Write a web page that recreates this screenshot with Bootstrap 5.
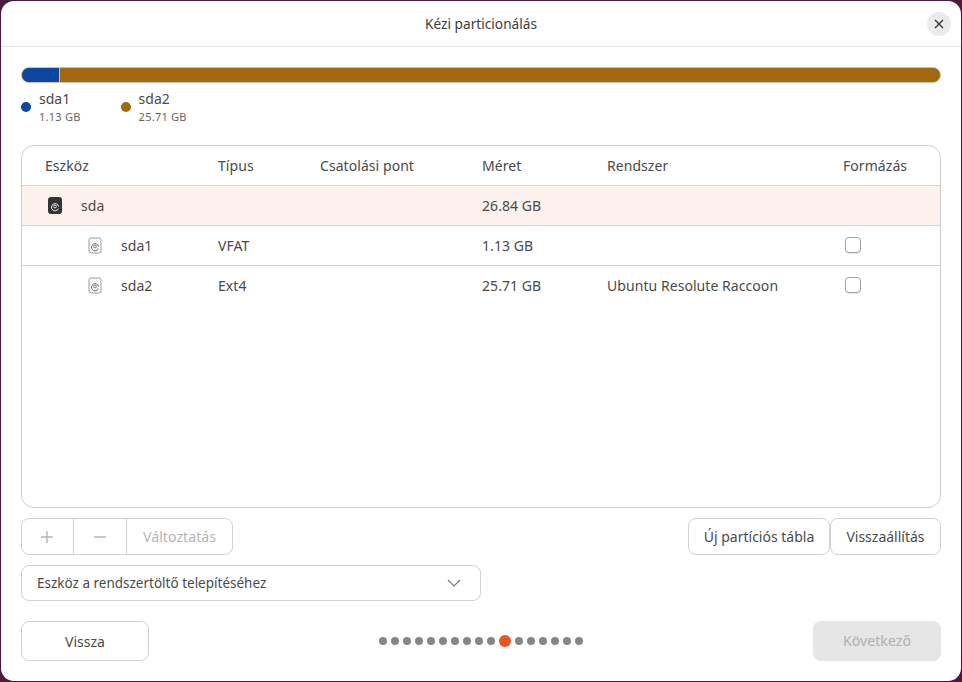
<!DOCTYPE html>
<html lang="hu">
<head>
    <meta charset="UTF-8">
    <meta name="viewport" content="width=device-width, initial-scale=1.0">
    <title>Kézi particionálás</title>
    <link rel="stylesheet" href="https://cdn.jsdelivr.net/npm/bootstrap@5.3.0/dist/css/bootstrap.min.css">
    <style>
        html, body { height: 100%; }
        body { background: #4b1b3f; font-family: "Noto Sans", "Open Sans", sans-serif; font-size: 14px; color: #4a4a4a; overflow: hidden; }
        .app-window { background: #fff; height: 680px; margin: 1px; border-radius: 13px; overflow: hidden; }
        .app-head { height: 46px; flex-shrink: 0; border-bottom: 1px solid #e3e3e3; }
        .app-title { font-size: 13.7px; color: #3d3d3d; padding-top: 1px; }
        .close-btn { right: 10px; top: 11px; width: 24px; height: 24px; background: #ebebeb; border: 0; border-radius: 50%; padding: 0; }
        .app-body { padding: 20px; }
        .usage-bar { height: 16px; flex-shrink: 0; border-radius: 8px; border: 1px solid #c9c4bb; background: #a1680d; overflow: hidden; }
        .usage-blue { background: #0c47a1; border-right: 1px solid #c9c4bb; }
        .legend-row { margin-top: 7px; height: 40px; gap: 40px; flex-shrink: 0; }
        .legend-dot { width: 10px; height: 10px; border-radius: 50%; margin-top: 12px; margin-right: 8px; }
        .legend-name { font-size: 14px; line-height: 18px; }
        .legend-size { font-size: 11px; letter-spacing: .25px; line-height: 16px; color: #666; margin-top: 1px; }
        .dot-blue { background: #0c47a1; }
        .dot-brown { background: #a1680d; }
        .parts-box { height: 363px; flex-shrink: 0; margin-top: 15px; border: 1px solid #cfcfcf; border-radius: 13px; overflow: hidden; }
        .parts-table { table-layout: fixed; width: 100%; margin: 0; border-collapse: separate; border-spacing: 0; font-size: 14px; letter-spacing: .06px; }
        .parts-table th, .parts-table td { height: 40px; padding: 0; font-weight: 400; vertical-align: middle; border-bottom: 1px solid #d4d4d4; background: transparent; box-shadow: none; color: #4a4a4a; }
        .parts-table tbody tr:last-child td { border-bottom: 0; padding-bottom: 1px; }
        .parts-table th:first-child { padding-left: 23px; }
        .parts-table .row-disk td { background: #fcf1ed; }
        .tree-icon { width: 14px; height: 17px; display: block; }
        .disk-cell { gap: 19px; padding-left: 26px; }
        .part-cell { gap: 19px; padding-left: 66px; }
        .fmt-check { width: 16px; height: 16px; margin: -1px 0 0 2px; display: block; border: 1px solid #a0a0a0; border-radius: 4px; background: #fff; box-shadow: 0 1px 1px rgba(0,0,0,.08); appearance: none; }
        .tool-row { margin-top: 10px; height: 37px; flex-shrink: 0; }
        .seg-group { border: 1px solid #d2d2d2; border-radius: 8px; height: 37px; color: #b5b5b5; font-size: 14.2px; }
        .seg-item { height: 100%; border-right: 1px solid #d2d2d2; }
        .seg-item:last-child { border-right: 0; }
        .seg-add { width: 52px; padding-right: 2px; }
        .seg-remove { width: 53px; }
        .seg-change { width: 105px; }
        .soft-btn { height: 37px; border: 1px solid #d2d2d2; border-radius: 8px; background: #fff; color: #4a4a4a; font-size: 14px; padding: 0; }
        .new-table-btn { width: 142px; }
        .reset-btn { width: 111px; }
        .boot-select { width: 460px; height: 36px; flex-shrink: 0; margin-top: 10px; border: 1px solid #d2d2d2; border-radius: 8px; padding: 0 19px 0 15px; font-size: 13.5px; }
        .foot-row { margin-top: 20px; height: 40px; flex-shrink: 0; }
        .back-btn { width: 128px; height: 40px; }
        .next-btn { width: 128px; height: 40px; background: #e6e6e6; border: 0; border-radius: 8px; color: #b0b0b0; font-size: 14.2px; padding: 0; }
        .step-dots { left: 358px; top: 16px; gap: 4px; }
        .step-dot { width: 8px; height: 8px; border-radius: 50%; background: #868686; }
        .step-now { width: 12px; height: 12px; background: #e95420; margin: -2px 0; }
    </style>
</head>
<body>
    <div class="app-window d-flex flex-column">
        <!-- Header -->
        <div class="app-head position-relative d-flex align-items-center justify-content-center">
            <span class="app-title">Kézi particionálás</span>
            <button class="close-btn position-absolute d-flex align-items-center justify-content-center" type="button" aria-label="Bezárás">
                <svg width="10" height="10" viewBox="0 0 10 10"><path d="M1 1l8 8M9 1l-8 8" stroke="#2e2e2e" stroke-width="1.2" fill="none"/></svg>
            </button>
        </div>

        <div class="app-body d-flex flex-column">
            <!-- Usage bar -->
            <div class="usage-bar d-flex">
                <div class="usage-blue" id="barBlue"></div>
            </div>
            <div class="legend-row d-flex">
                <div class="d-flex">
                    <span class="legend-dot dot-blue"></span>
                    <div><div class="legend-name">sda1</div><div class="legend-size">1.13 GB</div></div>
                </div>
                <div class="d-flex">
                    <span class="legend-dot dot-brown"></span>
                    <div><div class="legend-name">sda2</div><div class="legend-size">25.71 GB</div></div>
                </div>
            </div>

            <!-- Partition table -->
            <div class="parts-box">
                <table class="table parts-table">
                    <colgroup>
                        <col style="width:196px"><col style="width:102px"><col style="width:162px"><col style="width:125px"><col style="width:236px"><col>
                    </colgroup>
                    <thead>
                        <tr><th>Eszköz</th><th>Típus</th><th>Csatolási pont</th><th>Méret</th><th>Rendszer</th><th>Formázás</th></tr>
                    </thead>
                    <tbody id="partRows"></tbody>
                </table>
            </div>

            <!-- Tools -->
            <div class="tool-row d-flex justify-content-between">
                <div class="seg-group d-flex">
                    <div class="seg-item seg-add d-flex align-items-center justify-content-center">
                        <svg width="12" height="12" viewBox="0 0 12 12"><path d="M6 0v12M0 6h12" stroke="#b5b5b5" stroke-width="1.4" fill="none"/></svg>
                    </div>
                    <div class="seg-item seg-remove d-flex align-items-center justify-content-center">
                        <svg width="12" height="12" viewBox="0 0 12 12"><path d="M0 6h12" stroke="#b5b5b5" stroke-width="1.4" fill="none"/></svg>
                    </div>
                    <div class="seg-item seg-change d-flex align-items-center justify-content-center">Változtatás</div>
                </div>
                <div class="d-flex">
                    <button class="soft-btn new-table-btn" type="button">Új partíciós tábla</button>
                    <button class="soft-btn reset-btn" type="button">Visszaállítás</button>
                </div>
            </div>

            <div class="boot-select d-flex align-items-center justify-content-between">
                <span>Eszköz a rendszertöltő telepítéséhez</span>
                <svg width="14" height="8" viewBox="0 0 14 8"><path d="M1 1l6 6 6-6" stroke="#777" stroke-width="1.1" fill="none"/></svg>
            </div>

            <!-- Footer -->
            <div class="foot-row position-relative d-flex justify-content-between">
                <button class="soft-btn back-btn" type="button">Vissza</button>
                <div class="step-dots position-absolute d-flex align-items-center" id="stepDots"></div>
                <button class="next-btn" type="button" disabled>Következő</button>
            </div>
        </div>
    </div>

    <script>
        const diskIcon = (dark) => {
            const line = dark ? "#eee" : "#666";
            return `<svg class="tree-icon" viewBox="0 0 14 17">
            <rect x="${dark ? 0.5 : 1}" y="${dark ? 0.5 : 1}" width="${dark ? 13 : 12}" height="${dark ? 16 : 15}" rx="2" fill="${dark ? '#333' : '#fff'}" stroke="${dark ? '#333' : '#999'}"/>
            <path d="M10.4 11.6A3.6 3.6 0 1 1 10.6 9.5" fill="none" stroke="${line}"/>
            <circle cx="7" cy="9.5" r="1.4" fill="none" stroke="${line}" stroke-width=".9"/>
        </svg>`;
        };

        const rows = [
            { cls: "row-disk", cell: "disk-cell", name: "sda", dark: true, type: "", size: "26.84 GB", sys: "", check: false },
            { cls: "", cell: "part-cell", name: "sda1", dark: false, type: "VFAT", size: "1.13 GB", sys: "", check: true },
            { cls: "", cell: "part-cell", name: "sda2", dark: false, type: "Ext4", size: "25.71 GB", sys: "Ubuntu Resolute Raccoon", check: true }
        ];

        document.getElementById("partRows").innerHTML = rows.map(r => `<tr class="${r.cls}">
            <td><div class="d-flex align-items-center ${r.cell}">${diskIcon(r.dark)}<span>${r.name}</span></div></td>
            <td>${r.type}</td>
            <td></td>
            <td>${r.size}</td>
            <td>${r.sys}</td>
            <td>${r.check ? '<input type="checkbox" class="fmt-check">' : ''}</td>
        </tr>`).join("");

        // Bar width comes from the partition sizes
        document.getElementById("barBlue").style.width = Math.floor(1.13 / 26.84 * 918) + "px";

        let dots = "";
        for (let i = 0; i < 17; i++) {
            dots += `<span class="step-dot${i === 10 ? ' step-now' : ''}"></span>`;
        }
        document.getElementById("stepDots").innerHTML = dots;
    </script>
    <script src="https://cdn.jsdelivr.net/npm/bootstrap@5.3.0/dist/js/bootstrap.bundle.min.js"></script>
</body>
</html>
